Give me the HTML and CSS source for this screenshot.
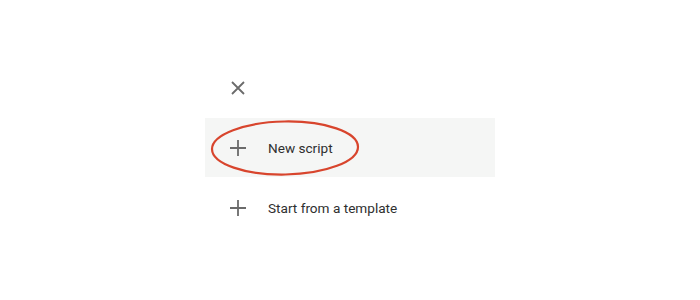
FILE: index.html
```html
<!DOCTYPE html>
<html>
<head>
<meta charset="utf-8">
<link rel="stylesheet" href="styles.css">
</head>
<body>
<div class="menu">
  <div class="close-row">
    <svg class="icon" viewBox="0 0 16 16" width="16" height="16"><path d="M2 2 L14 14 M14 2 L2 14" stroke="#6b6b6b" stroke-width="1.8" fill="none"/></svg>
  </div>
  <div class="item active">
    <svg class="icon plus" viewBox="0 0 18 18" width="18" height="18"><path d="M9 1 V17 M1 9 H17" stroke="#6b6b6b" stroke-width="1.8" fill="none"/></svg>
    <span class="label">New script</span>
    <svg class="circle" viewBox="0 0 150 58" width="150" height="58"><ellipse cx="75" cy="29" rx="73" ry="26.5" stroke="#d8452d" stroke-width="2.2" fill="none" transform="rotate(-1 75 29)"/></svg>
  </div>
  <div class="item">
    <svg class="icon plus" viewBox="0 0 18 18" width="18" height="18"><path d="M9 1 V17 M1 9 H17" stroke="#6b6b6b" stroke-width="1.8" fill="none"/></svg>
    <span class="label">Start from a template</span>
  </div>
</div>
</body>
</html>
```
FILE: styles.css
```css
html, body {
  margin: 0;
  padding: 0;
  background: #ffffff;
}
.menu {
  margin-left: 205px;
  width: 290px;
  padding-top: 73px;
  display: flex;
  flex-direction: column;
  font-family: Roboto, "Liberation Sans", sans-serif;
}
.close-row {
  height: 30px;
  display: flex;
  align-items: center;
  padding-left: 25px;
  margin-bottom: 15px;
}
.item {
  position: relative;
  height: 59px;
  display: flex;
  align-items: center;
  padding-left: 24px;
}
.item.active {
  background: #f5f6f5;
}
.item + .item {
  height: 61px;
}
.icon {
  display: block;
  flex: none;
}
.label {
  margin-left: 21px;
  font-size: 13.6px;
  color: #2f2f2f;
}
.circle {
  position: absolute;
  left: 5px;
  top: 1px;
}
```
